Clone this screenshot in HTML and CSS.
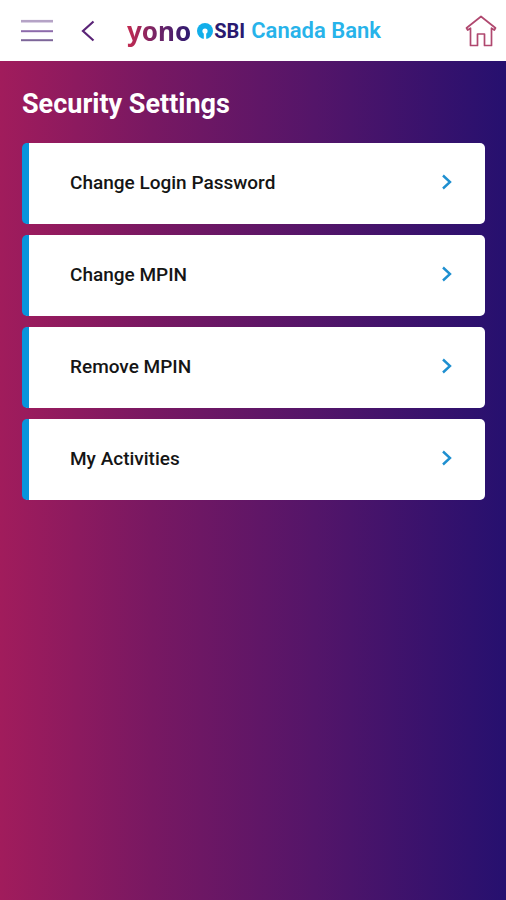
FILE: index.html
```html
<!DOCTYPE html>
<html lang="en">
<head>
  <meta charset="UTF-8" />
  <meta name="viewport" content="width=device-width, initial-scale=1.0" />
  <title>Security Settings</title>
  <link rel="stylesheet" href="styles.css">
</head>
<body>
  <header class="topbar">
    <button class="icon-btn menu" aria-label="Menu">
      <svg width="34" height="24" viewBox="0 0 34 24" fill="none">
        <path d="M1 2.2h32" stroke="#b5a3c6" stroke-width="2.6" />
        <path d="M1 12.2h32" stroke="#8d6bab" stroke-width="2" />
        <path d="M1 21.2h32" stroke="#7d6699" stroke-width="2" />
      </svg>
    </button>
    <button class="icon-btn back" aria-label="Back">
      <svg width="14" height="22" viewBox="0 0 14 22" fill="none" stroke="#5a2477" stroke-width="2.2">
        <path d="M12.500 1.500L2 11l10.500 9.500" />
      </svg>
    </button>
    <div class="brand">
      <span class="yono">yono</span>
      <svg class="sbi-logo" width="16" height="18" viewBox="0 0 16 18">
        <circle cx="8" cy="9" r="8" fill="#12aeea" />
        <circle cx="8" cy="9" r="2.6" fill="#ffffff" />
        <path stroke="#ffffff" stroke-width="2.4" d="M8 9v9" />
      </svg>
      <span class="sbi">SBI</span>
      <span class="bank">Canada Bank</span>
    </div>
    <button class="icon-btn home" aria-label="Home">
      <svg width="32" height="32" viewBox="0 0 32 32" fill="none" stroke="#b0486f" stroke-width="1.7" stroke-linejoin="round">
        <path d="M16 1.500L1.500 13l1.200 2L5.500 13.200V30.500H12.500V19H19.500V30.500H26.500V13.200L29.300 15L30.500 13Z" />
      </svg>
    </button>
  </header>

  <main class="content">
    <h1>Security Settings</h1>
    <nav class="settings">
      <a class="card" href="#password">
        <span>Change Login Password</span>
        <svg class="arrow" width="12" height="16" viewBox="0 0 12 16"><path d="M2 1.500L9 8l-7 6.500" /></svg>
      </a>
      <a class="card" href="#change-mpin">
        <span>Change MPIN</span>
        <svg class="arrow" width="12" height="16" viewBox="0 0 12 16"><path d="M2 1.500L9 8l-7 6.500" /></svg>
      </a>
      <a class="card" href="#remove-mpin">
        <span>Remove MPIN</span>
        <svg class="arrow" width="12" height="16" viewBox="0 0 12 16"><path d="M2 1.500L9 8l-7 6.500" /></svg>
      </a>
      <a class="card" href="#activities">
        <span>My Activities</span>
        <svg class="arrow" width="12" height="16" viewBox="0 0 12 16"><path d="M2 1.500L9 8l-7 6.500" /></svg>
      </a>
    </nav>
  </main>
</body>
</html>
```

FILE: styles.css
```css
* {
  box-sizing: border-box;
}

body {
  margin: 0;
  min-height: 100vh;
  display: flex;
  flex-direction: column;
  font-family: Roboto, "Liberation Sans", sans-serif;
}

.topbar {
  display: flex;
  align-items: center;
  padding: 0 9px 0 20px;
  height: 61px;
  background: #ffffff;
}

.icon-btn {
  display: flex;
  padding: 0;
  border: none;
  background: none;
  cursor: pointer;
}

.back {
  margin-left: 27px;
}

.brand {
  display: flex;
  align-items: center;
  margin-left: 32px;
  padding-top: 1px;
  line-height: 32px;
  white-space: nowrap;
}

.yono {
  font-family: "Noto Sans", sans-serif;
  font-size: 26px;
  font-weight: 700;
  background: linear-gradient(90deg, #c42a50, #6d2468 50%, #2c1a70);
  background-clip: text;
  -webkit-background-clip: text;
  color: transparent;
}

.sbi-logo {
  margin-left: 6px;
}

.sbi {
  margin-left: 1px;
  font-size: 20px;
  font-weight: 700;
  color: #2a1a70;
}

.bank {
  margin-left: 6px;
  font-size: 22px;
  font-weight: 600;
  color: #27b3ea;
}

.home {
  margin-left: auto;
}

.content {
  flex: 1;
  padding: 25px 21px 24px 22px;
  background: linear-gradient(90deg, #a11c5c, #781862 30%, #541569 62%, #26106f);
}

h1 {
  margin: 0 0 21px;
  font-size: 27px;
  line-height: 36px;
  font-weight: 700;
  color: #ffffff;
}

.settings {
  display: flex;
  flex-direction: column;
  gap: 11px;
}

.card {
  display: flex;
  align-items: center;
  justify-content: space-between;
  height: 81px;
  padding: 0 32px 3px 41px;
  border-left: 7px solid #0994dc;
  border-radius: 5px;
  background: #ffffff;
  color: #151515;
  font-size: 19px;
  font-weight: 500;
  text-decoration: none;
}

.arrow {
  fill: none;
  stroke: #1e8fd0;
  stroke-width: 2.4;
}
```
